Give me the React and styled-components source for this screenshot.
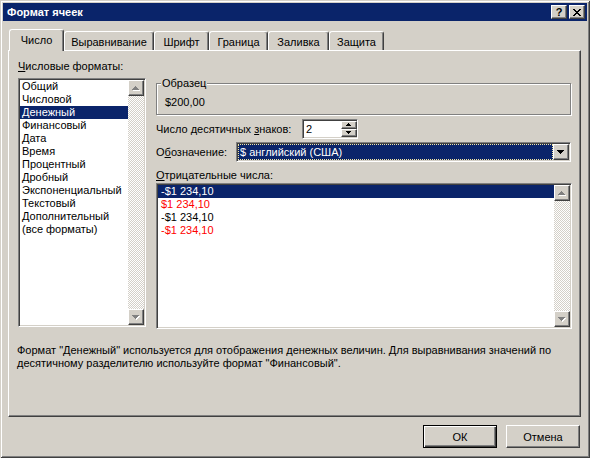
import React from 'react';
import styled, { createGlobalStyle } from 'styled-components';

const face = '#D4D0C8';
const navy = '#0A246A';

const GlobalStyle = createGlobalStyle`
  html, body {
    margin: 0;
    padding: 0;
    background: ${face};
  }
  body {
    font-family: "Liberation Sans", Arial, sans-serif;
    font-size: 11px;
    color: #000;
  }
`;

const Window = styled.div`
  width: 590px;
  height: 458px;
  box-sizing: border-box;
  padding: 3px;
  background: ${face};
  box-shadow: inset 1px 1px ${face}, inset -1px -1px #404040, inset 2px 2px #fff, inset -2px -2px #808080;
  display: flex;
  flex-direction: column;
`;

const TitleBar = styled.div`
  height: 18px;
  background: ${navy};
  display: flex;
  align-items: center;
  padding: 0 2px;
`;

const Title = styled.div`
  flex: 1;
  color: #fff;
  font-weight: bold;
  font-size: 11px;
  padding-left: 2px;
  line-height: 18px;
`;

const CaptionButtons = styled.div`
  display: flex;
  gap: 2px;
`;

const Raised = `
  box-sizing: border-box;
  background: ${face};
  border: 1px solid;
  border-color: #fff #404040 #404040 #fff;
  box-shadow: inset -1px -1px #808080;
`;

const CaptionButton = styled.div`
  ${Raised}
  width: 16px;
  height: 14px;
  display: flex;
  align-items: center;
  justify-content: center;
  font-weight: bold;
  font-size: 11px;
  line-height: 12px;
`;

const TabRow = styled.div`
  margin-top: 8px;
  height: 21px;
  display: flex;
  align-items: flex-end;
  padding-left: 6px;
`;

const Tab = styled.div`
  box-sizing: border-box;
  width: ${(p) => p.$w}px;
  height: ${(p) => (p.$active ? 22 : 19)}px;
  margin-bottom: ${(p) => (p.$active ? -1 : 0)}px;
  position: relative;
  z-index: ${(p) => (p.$active ? 1 : 0)};
  background: ${face};
  border-top: 1px solid #fff;
  border-left: 1px solid #fff;
  border-right: 1px solid #404040;
  border-radius: 3px 3px 0 0;
  box-shadow: inset -1px 0 #808080;
  padding-top: 4px;
  line-height: 13px;
  text-align: center;
`;

const Panel = styled.div`
  box-sizing: border-box;
  height: 367px;
  margin: 0 6px 0 5px;
  border: 1px solid;
  border-color: #fff #404040 #404040 #fff;
  box-shadow: inset -1px -1px #808080;
  padding: 9px 8px 0 9px;
  display: flex;
  flex-direction: column;
`;

const Columns = styled.div`
  display: flex;
  gap: 10px;
  align-items: flex-start;
`;

const LeftCol = styled.div`
  width: 128px;
  display: flex;
  flex-direction: column;
`;

const RightCol = styled.div`
  flex: 1;
  display: flex;
  flex-direction: column;
`;

const Label = styled.div`
  line-height: 13px;
  height: 13px;
  white-space: nowrap;
  width: ${(p) => (p.$w ? `${p.$w}px` : 'auto')};
  flex-shrink: 0;
  margin-bottom: ${(p) => p.$mb || 0}px;
  margin-top: ${(p) => p.$mt || 0}px;
`;

const Sunken = `
  box-sizing: border-box;
  border: 1px solid;
  border-color: #808080 #fff #fff #808080;
  box-shadow: inset 1px 1px #404040, inset -1px -1px ${face};
  padding: 1px;
`;

const ListBox = styled.div`
  ${Sunken}
  height: ${(p) => p.$h}px;
  background: #fff;
  display: flex;
`;

const Items = styled.div`
  flex: 1;
  display: flex;
  flex-direction: column;
`;

const Item = styled.div`
  height: 13px;
  line-height: 13px;
  padding-left: ${(p) => p.$pad || 2}px;
  white-space: nowrap;
  background: ${(p) => (p.$selected ? navy : 'transparent')};
  color: ${(p) => (p.$selected ? '#fff' : p.$red ? '#FF0000' : '#000')};
`;

const ScrollBar = styled.div`
  width: 16px;
  display: flex;
  flex-direction: column;
`;

const ScrollButton = styled.div`
  ${Raised}
  width: 16px;
  height: ${(p) => p.$h || 16}px;
  display: flex;
  align-items: center;
  justify-content: center;
  flex-shrink: 0;
`;

const Track = styled.div`
  flex: 1;
  background: repeating-conic-gradient(${face} 0 25%, #fff 0 50%) 0 0 / 2px 2px;
`;

const GroupBox = styled.div`
  position: relative;
  box-sizing: border-box;
  margin-top: 23px;
  width: calc(100% - 1px);
  height: 32px;
  border: 1px solid #808080;
  box-shadow: inset 1px 1px #fff, 1px 1px 0 #fff;
  padding: 12px 0 0 8px;
  line-height: 13px;
`;

const Legend = styled.div`
  position: absolute;
  top: -7px;
  left: 4px;
  padding: 0 1px;
  background: ${face};
  line-height: 13px;
`;

const Row = styled.div`
  display: flex;
  align-items: center;
  height: 20px;
  margin-top: ${(p) => p.$mt}px;
`;

const SpinBox = styled.div`
  ${Sunken}
  width: 56px;
  height: 20px;
  background: #fff;
  display: flex;
`;

const SpinText = styled.div`
  flex: 1;
  padding-left: 2px;
  line-height: 16px;
`;

const SpinButtons = styled.div`
  display: flex;
  flex-direction: column;
  width: 15px;
`;

const ComboBox = styled.div`
  ${Sunken}
  flex: 1;
  margin-right: 1px;
  height: 20px;
  background: #fff;
  display: flex;
`;

const ComboValue = styled.div`
  flex: 1;
  box-sizing: border-box;
  background: ${navy};
  color: #fff;
  border: 1px dotted #F3E7A4;
  line-height: 14px;
  padding-left: 1px;
  white-space: nowrap;
`;

const Description = styled.div`
  margin-top: 15px;
  margin-left: -1px;
  width: 548px;
  line-height: 13px;
`;

const ButtonRow = styled.div`
  margin-top: 8px;
  display: flex;
  justify-content: flex-end;
  gap: 9px;
  padding-right: 7px;
`;

const Button = styled.div`
  box-sizing: border-box;
  width: 74px;
  height: 23px;
  display: flex;
  align-items: center;
  justify-content: center;
  background: ${face};
  border: 1px solid;
  border-color: ${(p) => (p.$default ? '#000' : '#fff #404040 #404040 #fff')};
  box-shadow: ${(p) =>
    p.$default
      ? 'inset 1px 1px #fff, inset -1px -1px #404040, inset -2px -2px #808080'
      : 'inset -1px -1px #808080'};
`;

const UP7 = 'M3 0h1v1h1v1h1v1h1v1H0V3h1V2h1V1h1z';
const DOWN7 = 'M0 0h7v1H6v1H5v1H4v1H3V3H2V2H1V1H0z';
const UP5 = 'M2 0h1v1h1v1h1v1H0V2h1V1h1z';
const DOWN5 = 'M0 0h5v1H4v1H3v1H2V2H1V1H0z';

const Arrow = ({ d, w, h, disabled }) => (
  <svg width={w + 1} height={h + 1} viewBox={`0 0 ${w + 1} ${h + 1}`} shapeRendering="crispEdges">
    {disabled && <path d={d} fill="#fff" transform="translate(1 1)" />}
    <path d={d} fill={disabled ? '#808080' : '#000'} />
  </svg>
);

const CloseGlyph = () => {
  const rows = [
    [0, 1, 6, 7],
    [1, 2, 5, 6],
    [2, 3, 4, 5],
    [3, 4],
    [2, 3, 4, 5],
    [1, 2, 5, 6],
    [0, 1, 6, 7],
  ];
  return (
    <svg width="8" height="7" viewBox="0 0 8 7" shapeRendering="crispEdges">
      {rows.map((r, y) => r.map((x) => <rect key={`${x}-${y}`} x={x} y={y} width="1" height="1" fill="#000" />))}
    </svg>
  );
};

const formats = [
  'Общий',
  'Числовой',
  'Денежный',
  'Финансовый',
  'Дата',
  'Время',
  'Процентный',
  'Дробный',
  'Экспоненциальный',
  'Текстовый',
  'Дополнительный',
  '(все форматы)',
];

const negatives = [
  { text: '-$1 234,10', red: false },
  { text: '$1 234,10', red: true },
  { text: '-$1 234,10', red: false },
  { text: '-$1 234,10', red: true },
];

const tabs = [
  { label: 'Число', w: 55 },
  { label: 'Выравнивание', w: 90 },
  { label: 'Шрифт', w: 55 },
  { label: 'Граница', w: 59 },
  { label: 'Заливка', w: 61 },
  { label: 'Защита', w: 55 },
];

const VScroll = () => (
  <ScrollBar>
    <ScrollButton>
      <Arrow d={UP7} w={7} h={4} disabled />
    </ScrollButton>
    <Track />
    <ScrollButton>
      <Arrow d={DOWN7} w={7} h={4} disabled />
    </ScrollButton>
  </ScrollBar>
);

export default function App() {
  return (
    <>
      <GlobalStyle />
      <Window>
        <TitleBar>
          <Title>Формат ячеек</Title>
          <CaptionButtons>
            <CaptionButton>?</CaptionButton>
            <CaptionButton>
              <CloseGlyph />
            </CaptionButton>
          </CaptionButtons>
        </TitleBar>

        <TabRow>
          {tabs.map((t, i) => (
            <Tab key={t.label} $w={t.w} $active={i === 0}>
              {t.label}
            </Tab>
          ))}
        </TabRow>

        <Panel>
          <Columns>
            <LeftCol>
              <Label $mb={5}>
                <u>Ч</u>исловые форматы:
              </Label>
              <ListBox $h={249}>
                <Items>
                  {formats.map((f) => (
                    <Item key={f} $selected={f === 'Денежный'}>
                      {f}
                    </Item>
                  ))}
                </Items>
                <VScroll />
              </ListBox>
            </LeftCol>

            <RightCol>
              <GroupBox>
                <Legend>Образец</Legend>
                $200,00
              </GroupBox>

              <Row $mt={4}>
                <Label $w={146}>
                  Число десятичных <u>з</u>наков:
                </Label>
                <SpinBox>
                  <SpinText>2</SpinText>
                  <SpinButtons>
                    <ScrollButton $h={8}>
                      <Arrow d={UP5} w={5} h={3} />
                    </ScrollButton>
                    <ScrollButton $h={8}>
                      <Arrow d={DOWN5} w={5} h={3} />
                    </ScrollButton>
                  </SpinButtons>
                </SpinBox>
              </Row>

              <Row $mt={3}>
                <Label $w={80}>
                  О<u>б</u>означение:
                </Label>
                <ComboBox>
                  <ComboValue>$ английский (США)</ComboValue>
                  <ScrollButton>
                    <Arrow d={DOWN7} w={7} h={4} />
                  </ScrollButton>
                </ComboBox>
              </Row>

              <Label $mt={7} $mb={1}>
                <u>О</u>трицательные числа:
              </Label>
              <ListBox $h={146}>
                <Items>
                  {negatives.map((n, i) => (
                    <Item key={i} $pad={3} $selected={i === 0} $red={n.red}>
                      {n.text}
                    </Item>
                  ))}
                </Items>
                <VScroll />
              </ListBox>
            </RightCol>
          </Columns>

          <Description>
            Формат "Денежный" используется для отображения денежных величин. Для выравнивания значений по
            десятичному разделителю используйте формат "Финансовый".
          </Description>
        </Panel>

        <ButtonRow>
          <Button $default>ОК</Button>
          <Button>Отмена</Button>
        </ButtonRow>
      </Window>
    </>
  );
}
